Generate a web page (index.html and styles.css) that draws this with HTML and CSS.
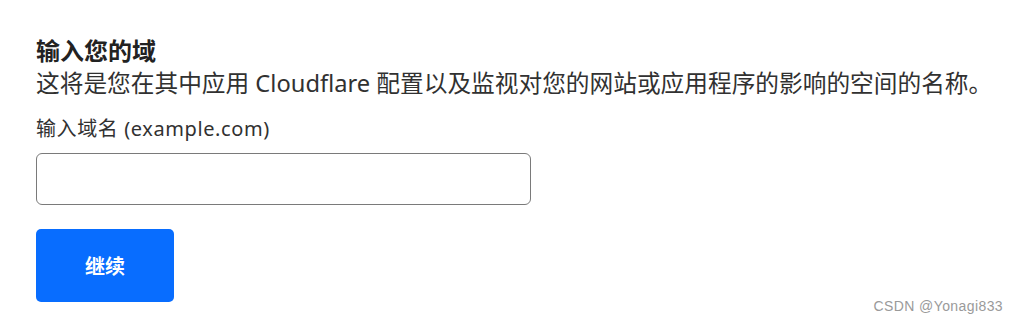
FILE: index.html
```html
<!DOCTYPE html>
<html lang="zh-CN">
<head>
    <meta charset="UTF-8">
    <meta name="viewport" content="width=device-width, initial-scale=1.0">
    <title>添加站点</title>
    <link rel="stylesheet" href="styles.css">
</head>
<body>
    <div class="add-site">
        <h2 class="site-title">输入您的域</h2>
        <p class="site-desc">这将是您在其中应用 Cloudflare 配置以及监视对您的网站或应用程序的影响的空间的名称。</p>

        <label for="domain-input" class="field-label">输入域名 (example.com)</label>
        <input type="text" id="domain-input" class="domain-input">

        <button type="button" class="continue-button">继续</button>
    </div>
    <div class="watermark">CSDN @Yonagi833</div>
</body>
</html>
```

FILE: styles.css
```css
body {
    margin: 0;
    font-family: "Noto Sans", "Noto Sans CJK SC", sans-serif;
    color: #313131;
    background: #fff;
}
.add-site {
    display: flex;
    flex-direction: column;
    align-items: flex-start;
    padding: 35px 0 0 36px;
}
.site-title {
    margin: 0;
    font-size: 24px;
    line-height: 32px;
    font-weight: bold;
    color: #222;
}
.site-desc {
    margin: 0;
    font-size: 23.7px;
    line-height: 32px;
    white-space: nowrap;
}
.field-label {
    margin-top: 16px;
    font-size: 20px;
    line-height: 28px;
    letter-spacing: 0.6px;
}
.domain-input {
    box-sizing: border-box;
    width: 495px;
    height: 52px;
    margin-top: 10px;
    border: 1px solid #7a7a7a;
    border-radius: 6px;
    padding: 0 12px;
    font-size: 18px;
}
.continue-button {
    width: 138px;
    height: 73px;
    margin-top: 24px;
    border: none;
    border-radius: 5px;
    background: #086dff;
    color: #fff;
    font-family: inherit;
    font-size: 20px;
    font-weight: bold;
}
.watermark {
    position: absolute;
    right: 13px;
    bottom: 9px;
    font-family: "Liberation Sans", "Noto Sans CJK SC", sans-serif;
    font-size: 14px;
    letter-spacing: 0.4px;
    color: #9a9a9a;
}
```
